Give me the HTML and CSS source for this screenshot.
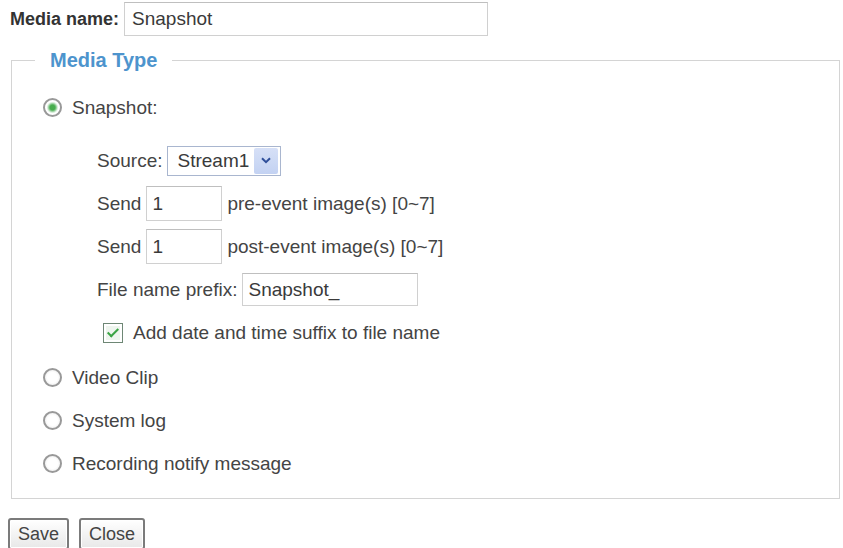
FILE: index.html
```html
<!DOCTYPE html>
<html lang="en">
<head>
    <meta charset="UTF-8">
    <title>Media Settings</title>
    <link rel="stylesheet" href="styles.css">
</head>
<body>

    <form class="media-form">
        <div class="name-row">
            <label class="name-label" for="mediaName">Media name:</label>
            <input class="text-field name-field" id="mediaName" type="text" value="Snapshot">
        </div>

        <fieldset class="media-type">
            <legend>Media Type</legend>
            <div class="media-body">
                <label class="option"><input type="radio" name="mediaType" checked>Snapshot:</label>

                <!-- Settings shown for the snapshot type -->
                <div class="snapshot-options">
                    <div class="opt-row">
                        <span>Source:</span>
                        <span class="select-wrap">
                            <select class="select-field">
                                <option>Stream1</option>
                                <option>Stream2</option>
                            </select>
                            <span class="select-arrow">
                                <svg width="10" height="7" viewBox="0 0 10 7"><path d="M1 1.2l4 4 4-4" fill="none" stroke="#2f4f9a" stroke-width="2"/></svg>
                            </span>
                        </span>
                    </div>
                    <div class="opt-row">
                        <span>Send</span>
                        <input class="text-field count-field" type="text" value="1">
                        <span>pre-event image(s) [0~7]</span>
                    </div>
                    <div class="opt-row">
                        <span>Send</span>
                        <input class="text-field count-field" type="text" value="1">
                        <span>post-event image(s) [0~7]</span>
                    </div>
                    <div class="opt-row">
                        <span>File name prefix:</span>
                        <input class="text-field prefix-field" type="text" value="Snapshot_">
                    </div>
                    <label class="opt-row check-row"><input type="checkbox" checked>Add date and time suffix to file name</label>
                </div>

                <label class="option"><input type="radio" name="mediaType">Video Clip</label>
                <label class="option"><input type="radio" name="mediaType">System log</label>
                <label class="option"><input type="radio" name="mediaType">Recording notify message</label>
            </div>
        </fieldset>

        <div class="actions">
            <button type="button" class="btn">Save</button>
            <button type="button" class="btn">Close</button>
        </div>
    </form>

</body>
</html>
```

FILE: styles.css
```css
body {
    margin: 0;
    font-family: "Liberation Sans", Arial, sans-serif;
    font-size: 19px;
    color: #444;
    background: #fff;
}

.media-form {
    padding-top: 2px;
}

/* Media name row */
.name-row {
    display: flex;
    align-items: center;
    gap: 5px;
    padding-left: 10px;
}

.name-label {
    font-weight: bold;
    font-size: 18px;
    color: #333;
}

.text-field {
    font: inherit;
    color: #3a3a3a;
    height: 35px;
    box-sizing: border-box;
    border: 1px solid #d0d0d0;
    border-top-color: #bfbfbf;
    padding: 0 5px;
    background: #fff;
    outline: none;
}

.name-field {
    width: 364px;
    height: 34px;
    padding-left: 7px;
}

.count-field {
    width: 76px;
}

.prefix-field {
    width: 176px;
    height: 33px;
}

/* Media type box */
.media-type {
    margin: 12px 3px 0 11px;
    padding: 0;
    border: 1px solid #d4d4d4;
    min-width: 0;
}

.media-type legend {
    margin-left: 23px;
    padding: 0 15px;
    font-size: 20px;
    font-weight: bold;
    line-height: 24px;
    color: #4d94cd;
}

.media-body {
    padding: 14px 0 13px 31px;
}

.option,
.opt-row {
    display: flex;
    align-items: center;
    height: 43px;
}

.opt-row {
    gap: 5px;
}

/* Radio buttons */
.option input[type="radio"] {
    appearance: none;
    width: 19px;
    height: 19px;
    margin: 0 10px 0 0;
    border: 2px solid #999;
    border-radius: 50%;
    background: radial-gradient(circle, #fff 0 5px, #f1f1f1 8px);
    box-sizing: border-box;
}

.option input[type="radio"]:checked {
    background: radial-gradient(circle, #47ad4d 0 2.5px, #7fc585 3.5px, #d9eedb 5px, #fff 6px);
}

.snapshot-options {
    margin: 10px 0 2px 54px;
}

/* Stream select */
.select-wrap {
    position: relative;
    display: inline-flex;
}

.select-field {
    appearance: none;
    font: inherit;
    color: #3a3a3a;
    width: 114px;
    height: 30px;
    padding: 0 0 0 9px;
    border: 1px solid #a9b6cf;
    border-radius: 0;
    background: #fff;
    outline: none;
}

.select-arrow {
    position: absolute;
    top: 2px;
    right: 3px;
    width: 24px;
    height: 26px;
    display: flex;
    align-items: center;
    justify-content: center;
    background: linear-gradient(#d6e0f7, #c3d2f2);
    border-radius: 2px;
    pointer-events: none;
}

/* Checkbox */
.check-row {
    padding-left: 6px;
    gap: 0;
}

.check-row input[type="checkbox"] {
    appearance: none;
    position: relative;
    width: 20px;
    height: 20px;
    margin: 0 10px 0 0;
    border: 1px solid #6e8775;
    background: #eef5ee;
    box-shadow: inset 0 0 0 2px #fff;
    box-sizing: border-box;
}

.check-row input[type="checkbox"]:checked::after {
    content: "";
    position: absolute;
    left: 6px;
    top: 2px;
    width: 4px;
    height: 9px;
    border: solid #3aa444;
    border-width: 0 2.5px 2.5px 0;
    transform: rotate(45deg);
}

/* Save / Close */
.actions {
    display: flex;
    gap: 10px;
    margin: 19px 0 0 8px;
}

.btn {
    font: inherit;
    font-size: 18px;
    color: #444;
    height: 32px;
    padding: 0 8px;
    border: 2px solid #7b7b7b;
    border-radius: 3px;
    background: linear-gradient(#fff, #e8e8e8);
    box-shadow: inset 0 0 0 1px #fff;
}
```
